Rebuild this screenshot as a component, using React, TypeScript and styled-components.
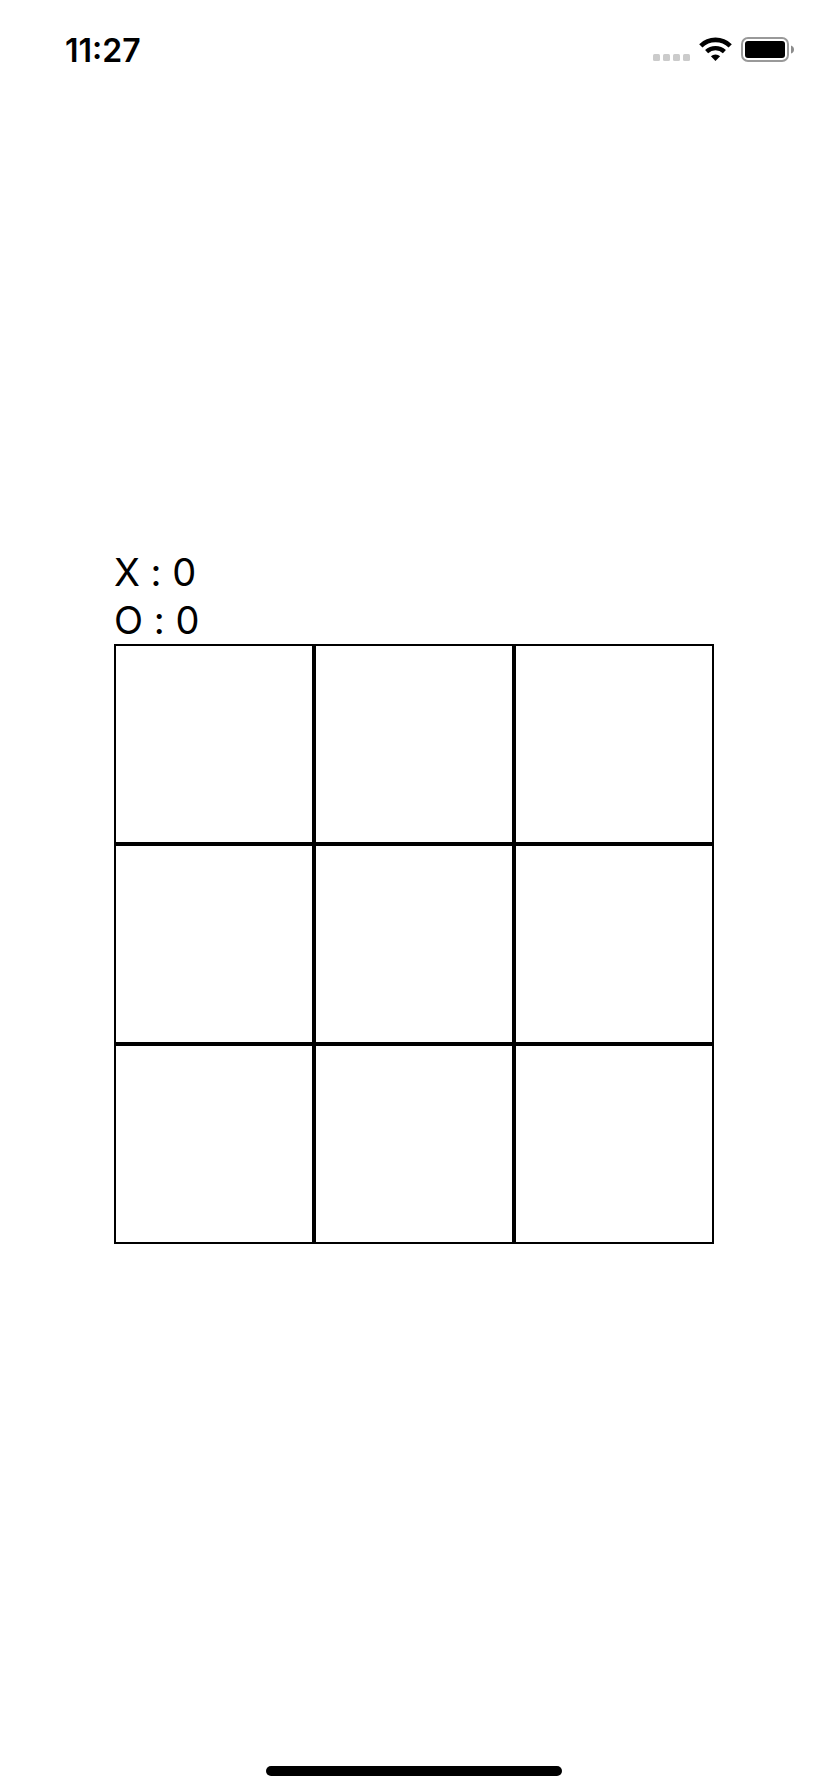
import React, { useState } from "react";
import styled, { createGlobalStyle } from "styled-components";

const GlobalStyle = createGlobalStyle`
  body {
    margin: 0;
    background: #fff;
    color: #000;
    font-family: Inter, "Liberation Sans", sans-serif;
  }
`;

const Screen = styled.div`
  display: grid;
  grid-template-rows: 1fr auto 1fr;
  min-height: 100vh;
`;

const StatusBar = styled.header`
  display: flex;
  align-items: flex-start;
  justify-content: space-between;
  padding: 30px 34px 0 65px;
`;

const Clock = styled.time`
  font-size: 32px;
  font-weight: 600;
  line-height: 42px;
`;

const StatusIcons = styled.div`
  display: flex;
  align-items: center;
  gap: 9px;
  height: 40px;
`;

const Game = styled.main`
  justify-self: center;
  width: 600px;
  max-width: 100%;
`;

const Score = styled.div`
  font-size: 38px;
  line-height: 48px;
  font-variant-ligatures: no-contextual;
`;

const Board = styled.div`
  display: grid;
  grid-template-columns: repeat(3, 1fr);
`;

const Cell = styled.button`
  aspect-ratio: 1;
  box-sizing: border-box;
  min-width: 0;
  padding: 0;
  border: 2px solid #000;
  border-radius: 0;
  background: #fff;
  color: #000;
  font: inherit;
  font-size: 80px;
`;

const HomeArea = styled.footer`
  display: flex;
  align-items: flex-end;
  justify-content: center;
  padding-bottom: 16px;
`;

const HomeIndicator = styled.div`
  width: 296px;
  height: 10px;
  border-radius: 5px;
  background: #000;
`;

const SignalIcon = () => (
  <svg width="37" height="26" viewBox="0 0 37 26" fill="#cbcbcb" aria-hidden="true">
    {[0, 10, 20, 30].map((x) => (
      <rect key={x} x={x} y="17" width="7" height="7" rx="1.5" />
    ))}
  </svg>
);

const WifiIcon = () => (
  <svg width="33" height="26" viewBox="0 0 33 26" fill="none" aria-hidden="true">
    <path d="M1.8 8.9 A21 21 0 0 1 31.2 8.9" stroke="#000" strokeWidth="4.6" />
    <path d="M7.6 14.7 A12.8 12.8 0 0 1 25.4 14.7" stroke="#000" strokeWidth="4.4" />
    <path d="M11.9 19.2 A6.8 6.8 0 0 1 21.1 19.2 L16.5 24 Z" fill="#000" />
  </svg>
);

const BatteryIcon = () => (
  <svg width="53" height="26" viewBox="0 0 53 26" aria-hidden="true">
    <rect x="1" y="1" width="46" height="23" rx="6" fill="none" stroke="#999" strokeWidth="2" />
    <rect x="4" y="4" width="40" height="17" rx="3" fill="#000" />
    <path d="M50 8.5 Q53 9.5 53 12.5 Q53 15.5 50 16.5 Z" fill="#8c8c8c" />
  </svg>
);

type Mark = "X" | "O" | null;

const LINES = [
  [0, 1, 2], [3, 4, 5], [6, 7, 8],
  [0, 3, 6], [1, 4, 7], [2, 5, 8],
  [0, 4, 8], [2, 4, 6],
];

export default function App() {
  const [cells, setCells] = useState<Mark[]>(Array(9).fill(null));
  const [turn, setTurn] = useState<"X" | "O">("X");
  const [scores, setScores] = useState({ X: 0, O: 0 });

  const play = (index: number) => {
    if (cells[index]) return;
    const next = cells.map((mark, i) => (i === index ? turn : mark));
    const won = LINES.some((line) => line.every((i) => next[i] === turn));
    if (won) setScores({ ...scores, [turn]: scores[turn] + 1 });
    setCells(won || next.every(Boolean) ? Array(9).fill(null) : next);
    setTurn(turn === "X" ? "O" : "X");
  };

  return (
    <>
      <GlobalStyle />
      <Screen>
        <StatusBar>
          <Clock>11:27</Clock>
          <StatusIcons>
            <SignalIcon />
            <WifiIcon />
            <BatteryIcon />
          </StatusIcons>
        </StatusBar>
        <Game>
          <Score>{`X : ${scores.X}`}</Score>
          <Score>{`O : ${scores.O}`}</Score>
          <Board>
            {cells.map((mark, i) => (
              <Cell key={i} type="button" aria-label={`Cell ${i + 1}`} onClick={() => play(i)}>
                {mark}
              </Cell>
            ))}
          </Board>
        </Game>
        <HomeArea>
          <HomeIndicator />
        </HomeArea>
      </Screen>
    </>
  );
}
